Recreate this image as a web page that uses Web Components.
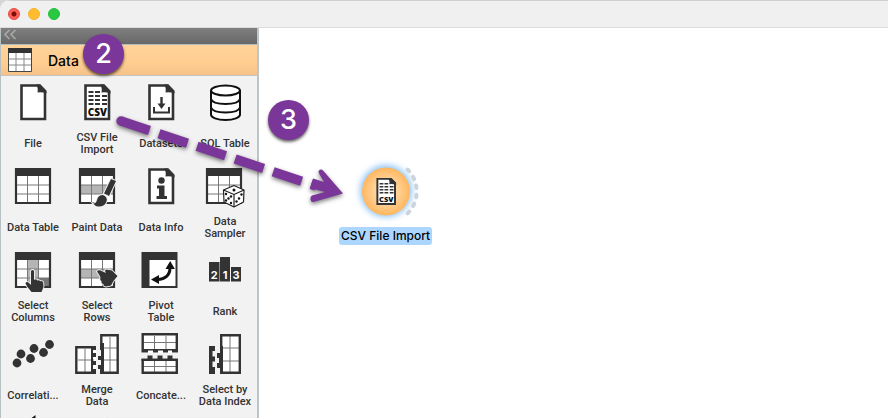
<!DOCTYPE html>
<html lang="en">
<head>
<meta charset="utf-8">
<title>Workflow editor</title>
<style>
  html, body { margin: 0; height: 100%; }
  body { font-family: Inter, "Liberation Sans", sans-serif; color: #262626; background: #d6d6d6; overflow: hidden; }
</style>
</head>
<body>
<app-window>
  <title-bar slot="title"></title-bar>
  <tool-box slot="side" heading="Data">
    <tool-item icon="file">File</tool-item>
    <tool-item icon="csv">CSV File<br>Import</tool-item>
    <tool-item icon="datasets">Datasets</tool-item>
    <tool-item icon="sql">SQL Table</tool-item>
    <tool-item icon="table">Data Table</tool-item>
    <tool-item icon="paint">Paint Data</tool-item>
    <tool-item icon="info">Data Info</tool-item>
    <tool-item icon="sampler">Data<br>Sampler</tool-item>
    <tool-item icon="columns">Select<br>Columns</tool-item>
    <tool-item icon="rows">Select<br>Rows</tool-item>
    <tool-item icon="pivot">Pivot<br>Table</tool-item>
    <tool-item icon="rank">Rank</tool-item>
    <tool-item icon="correlations">Correlati...</tool-item>
    <tool-item icon="merge">Merge<br>Data</tool-item>
    <tool-item icon="concatenate">Concate...</tool-item>
    <tool-item icon="index">Select by<br>Data Index</tool-item>
    <tool-item icon="transpose"></tool-item>
    <tool-item icon="randomize"></tool-item>
  </tool-box>
  <flow-canvas>
    <flow-node icon="csv" style="left:80px;top:137px">CSV File Import</flow-node>
  </flow-canvas>
  <drag-arrow slot="notes"></drag-arrow>
  <step-badge slot="notes" style="left:83px;top:34px">2</step-badge>
  <step-badge slot="notes" style="left:268px;top:100px">3</step-badge>
</app-window>

<script>
const D = '#333';
const page = `<path d="M12.500 6.500h18l5.500 5.500V40H12.500z" fill="#fff" stroke="${D}" stroke-width="2.600"/><path d="M27 5.500h4.500L37.500 12v2.500Q32 12.500 28.500 13.500 29.500 9 27 5.500z" fill="${D}"/>`;
const grid = (fill = '') => `<path d="M7 6h34v34H7z" fill="#fff"/>${fill}<path d="M18.500 12v28M29.500 12v28M8 22h32M8 31h32" stroke="#777" stroke-width="1"/><path d="M7 6h34v34H7z" fill="none" stroke="${D}" stroke-width="2.200"/><path d="M6 5h36v8H6z" fill="${D}"/>`;
const hand = `<path d="M-1.500-10q1.500-2 3 0V-1q2-1.500 3.200.5 2-1 3 .8 2.500-.8 3 1.500 1 4-1 7.500L9 11H-1L-5 6-7 2.500Q-6 0-3.500 2l2 2z" fill="${D}" stroke="#f2f2f2" stroke-width="1.800" paint-order="stroke"/>`;
const ICONS = {
  file: page,
  csv: page + `<path d="M15.500 13h5M22 13h5M15.500 17h5M22 17h5M29 17h5M15.500 21h5M22 21h5M29 21h5M15.500 25h5M22 25h5M29 25h5" stroke="${D}" stroke-width="2"/><text x="24.300" y="37.300" text-anchor="middle" font-family="Open Sans" font-weight="800" font-size="10" fill="#111">CSV</text>`,
  datasets: page + `<path d="M17 28v5.500h15V28" fill="none" stroke="${D}" stroke-width="2"/><path d="M24.500 18v8" stroke="${D}" stroke-width="2.400"/><path d="M20.500 24.500h8l-4 5.500z" fill="${D}"/>`,
  sql: `<g fill="#fff" stroke="#111" stroke-width="2"><path d="M10 11v24.500c0 3 6 5.500 14.500 5.500S39 38.500 39 35.500V11"/><ellipse cx="24.500" cy="11.500" rx="14.500" ry="5"/><path d="M10 20c1 3.500 7 5 14.500 5S38 23.500 39 20M10 28.500c1 3.500 7 5 14.500 5s13.500-1.500 14.500-5" fill="none"/></g>`,
  table: grid(),
  paint: grid('<path d="M8 22h32v9H8z" fill="#b5b5b5"/>') + `<g fill="${D}" stroke="#f2f2f2" stroke-width="2" paint-order="stroke"><path d="M38 16l5 2-7 15-5-2.500z"/><path d="M20 40.500q3 .5 4-3.500 1-5 6-5 5 2 3.500 6.500-2 5.500-8.500 5-3-.5-5-3z"/></g><path d="M30.500 31l5 2.300" stroke="#eee" stroke-width="1"/>`,
  info: page + `<circle cx="24.500" cy="17.500" r="3.200" fill="${D}"/><path d="M20 22.500h7.500V33H30v3H19.500v-3H22v-7.500h-2z" fill="${D}"/>`,
  sampler: `<g transform="translate(-1)">${grid()}</g><g fill="#fff" stroke="#222" stroke-width="1.200" stroke-linejoin="round"><path d="M33 22.500l10 4.500-.5 12-9.500 5-10-5-.5-12z"/><path d="M22.500 27l10.500 4.500L43 27M33 31.500V44" fill="none"/></g><g fill="#111"><circle cx="33" cy="27" r="1.500"/><circle cx="25" cy="31" r="1.200"/><circle cx="30" cy="33.500" r="1.200"/><circle cx="27.500" cy="35.500" r="1.200"/><circle cx="25" cy="37.500" r="1.200"/><circle cx="30" cy="40" r="1.200"/><circle cx="35.500" cy="38.500" r="1.200"/><circle cx="38" cy="35.500" r="1.200"/><circle cx="40.500" cy="31.500" r="1.200"/></g>`,
  columns: grid('<path d="M18.500 12h11v28h-11z" fill="#b5b5b5"/><path d="M30 31h11v9H30z" fill="#777"/>') + `<g transform="translate(23.500 34)">${hand}</g>`,
  rows: grid('<path d="M8 22h32v9H8z" fill="#b5b5b5"/>') + `<path d="M24 24.500q1-2 3.500-1l5.500 2.500q-2-3 .5-3.500l5.500 1 5.500 5.500-4 5-2.500 4.500-5 1q-3-.5-2.500-2.500-2.500-.5-2-3-2-1-1-3.500l-1.500-3z" fill="${D}" stroke="#f2f2f2" stroke-width="1.800" paint-order="stroke"/>`,
  pivot: `<path d="M4.500 5h36v36h-36z" fill="${D}"/><path d="M12.500 13h26v26h-26z" fill="#fff"/><path d="M20 32.500q13-.5 13-12" fill="none" stroke="#111" stroke-width="3"/><path d="M28.500 22l4.700-8 4.700 8zM22 28v9l-8-4.500z" fill="#111"/>`,
  rank: `<path d="M8 15h10.500v19.500H8zM19 10h10v24.500H19zM30 20h10v14.500H30z" fill="${D}"/><g font-family="Inter" font-weight="700" font-size="11" fill="#fff" text-anchor="middle"><text x="13.300" y="32">2</text><text x="24" y="32">1</text><text x="35" y="32">3</text></g>`,
  correlations: `<g fill="${D}"><circle cx="8" cy="32" r="4.400"/><circle cx="12" cy="23" r="4.400"/><circle cx="21.500" cy="27.500" r="4.400"/><circle cx="25" cy="17.500" r="4.400"/><circle cx="34.500" cy="21.500" r="4.400"/><circle cx="40.500" cy="13.500" r="4.400"/></g>`,
  merge: `<path d="M3 17h20v25H3zM29 5h17v37H29z" fill="#fff"/><path d="M12 18v23M5 29h16M37 6v35M31 17h14M31 29h14" stroke="#777"/><path d="M20 16.300H3.300v25.400H20M31 41.700h13.700V4.300H28.300V14" fill="none" stroke="${D}" stroke-width="2.400"/><path d="M18 15h5v4h-3v3h3v4h-3v4h3v4h-3v4h3v5h-5zM27 12h4v31h-4v-5h-2v-4h3v-5h-3v-4h3v-6h-1z" fill="${D}"/>`,
  concatenate: `<path d="M5 4h36v18H5zM5 27h36v16H5z" fill="#fff"/><path d="M17.500 5v13M29 5v13M6 11.500h34M17.500 29v13M29 29v13M6 35.500h34" stroke="#777"/><path d="M5.700 18V3.200h34.100V18M5.700 28v13.800h34.100V28" fill="none" stroke="${D}" stroke-width="2.400"/><path d="M4.500 18h36.500v3.500h-6v-2h-4v2h-5v-2h-5v2h-5v-2h-5v2h-6.500zM4.500 27.500h6v-3h5v3h5v-3h5v3h5v-3h5v3h5.500v2.500H4.500z" fill="${D}"/>`,
  index: `<path d="M21 4h18v39H21z" fill="#fff"/><path d="M29 5v37M21 17h17M21 30h17" stroke="#777"/><path d="M20.200 15V4.200h18.600v37.600H20.200V15" fill="none" stroke="${D}" stroke-width="2.400"/><path d="M19 15h3v26h-3v-4h-3v-5h2v-5h-2v-5h3zM8 15h6v5h-2.500v5.500H14v5h-2.500V36H14v7H8z" fill="${D}"/>`,
  transpose: `<path d="M20 5l6.500-5v10z" fill="#111"/>`,
  randomize: `<path d="M34 2.500l4 4h-8z" fill="#999"/>`
};
const svg = (name, size) => `<svg width="${size}" height="${size}" viewBox="0 0 48 48" aria-hidden="true">${ICONS[name] || ''}</svg>`;

const define = (name, render) => customElements.define(name, class extends HTMLElement {
  constructor() {
    super();
    this.attachShadow({ mode: 'open' });
  }
  connectedCallback() {
    this.shadowRoot.innerHTML = render(this);
  }
});

define('app-window', () => `<style>
  :host { display: flex; flex-direction: column; position: relative; height: 100vh; overflow: hidden; background: #fff; border-radius: 10px 0 0 0; }
  main { display: flex; flex: 1; min-height: 0; }
</style><slot name="title"></slot><main><slot name="side"></slot><slot></slot></main><slot name="notes"></slot>`);

define('title-bar', () => `<style>
  :host { display: flex; align-items: center; gap: 8px; height: 28px; flex: none; box-sizing: border-box; padding-left: 8px; background: #f0f0f0; border-top: 1px solid #d0d0d0; border-bottom: 1px solid #dcdcdc; }
  button { width: 12px; height: 12px; padding: 0; border-radius: 50%; border: 1px solid #e2463f; background: radial-gradient(circle, #7c0b08 0 2px, #fe5f57 3px); }
  .min { background: #febc2e; border-color: #f3b32b; }
  .max { background: #28c840; border-color: #24be3b; }
</style><button aria-label="Close"></button><button class="min" aria-label="Minimize"></button><button class="max" aria-label="Zoom"></button>`);

define('tool-box', el => `<style>
  :host { display: flex; flex-direction: column; flex: none; overflow: hidden; background: #f2f2f2; border-left: 1px solid #b9c0c3; border-right: 2px solid #bdc5c8; }
  button { font: inherit; color: #000; border: 0; margin: 0; text-align: left; }
  .collapse { height: 16px; flex: none; padding: 0 0 0 2px; background: linear-gradient(#7f7f7f, #686868); display: flex; align-items: flex-start; }
  .head { height: 32px; flex: none; display: flex; align-items: center; gap: 15px; padding: 0 6px; font-size: 14px; font-weight: 500; background: linear-gradient(#ffd39b, #ffcd90 60%, #f6c28a); border-top: 1px solid #b5bcbf; border-bottom: 1px solid #c4c4c0; }
  .grid { display: grid; grid-template-columns: repeat(4, 64px); grid-auto-rows: 84px; }
</style>
<button class="collapse" aria-label="Collapse"><svg width="14" height="12"><path d="M6.500 2L2 6.500 6.500 11M12.500 2L8 6.500 12.500 11" fill="none" stroke="#a8a8a8" stroke-width="1.700"/></svg></button>
<button class="head"><svg width="26" height="26"><path d="M2 2h22v22H2z" fill="#fff"/><path d="M9 6v18M17 6v18M2 12h22M2 18h22" stroke="#888"/><path d="M1.500 1.500h23v23h-23z" fill="none" stroke="#444"/><path d="M1 1h24v5H1z" fill="#333"/></svg><span>${el.getAttribute('heading')}</span></button>
<div class="grid"><slot></slot></div>`);

define('tool-item', el => `<style>
  :host { display: block; }
  button { width: 100%; height: 100%; display: flex; flex-direction: column; align-items: center; padding: 3px 0 0; border: 0; background: none; font: 500 11px/12px Roboto, "Liberation Sans", sans-serif; color: #333; }
  svg { flex: none; display: block; }
  span { flex: none; height: 34px; display: flex; align-items: center; }
  b { font-weight: inherit; text-align: center; }
</style><button>${svg(el.getAttribute('icon'), 48)}<span><b><slot></slot></b></span></button>`);

define('flow-canvas', () => `<style>
  :host { display: block; flex: 1; position: relative; background: #fff; overflow: hidden; }
</style><slot></slot>`);

define('flow-node', el => `<style>
  :host { position: absolute; display: flex; flex-direction: column; align-items: center; }
  .ring { display: block; margin-bottom: 8px; overflow: visible; }
  .name { font: 500 12px/18px Inter, "Liberation Sans", sans-serif; color: #000; background: #add6ff; border-radius: 3px; padding: 0 2px; white-space: nowrap; }
</style>
<svg class="ring" width="54" height="54" viewBox="0 0 54 54">
  <defs><radialGradient id="g"><stop offset="0" stop-color="#ffe3c0"/><stop offset=".55" stop-color="#ffcf92"/><stop offset="1" stop-color="#ffb75f"/></radialGradient><filter id="b" x="-40%" y="-40%" width="180%" height="180%"><feGaussianBlur stdDeviation="3"/></filter></defs>
  <circle cx="27" cy="26" r="26" fill="#8ec4f5" filter="url(#b)"/>
  <circle cx="27" cy="26.500" r="24" fill="url(#g)"/>
  <path d="M48.500 4.500a31 31 0 0 1 0 44" fill="none" stroke="#ccd5db" stroke-width="4" stroke-linecap="round" stroke-dasharray="2.500 6.700"/>
  <svg x="9" y="9" width="36" height="36" viewBox="0 0 48 48">${ICONS[el.getAttribute('icon')]}</svg>
</svg><span class="name"><slot></slot></span>`);

define('drag-arrow', () => `<style>
  :host { position: absolute; left: 110px; top: 110px; pointer-events: none; }
  svg { display: block; overflow: visible; filter: drop-shadow(0 2px 2px rgba(0,0,0,.5)); }
</style><svg width="240" height="100" viewBox="110 110 240 100" aria-hidden="true"><circle cx="121" cy="121" r="4.700" fill="#7a3799"/><path d="M121 121L316 186" stroke="#7a3799" stroke-width="9.500" stroke-dasharray="30 10.100"/><path d="M343 193.500L323.500 171q-2.500-2.500-4.500-.5-1 1 0 3L324 182l-11-3.500-3 9.500 15 4-13 3.500q-2 1-1.500 4 .5 3 3 2.500z" fill="#7a3799"/></svg>`);

define('step-badge', () => `<style>
  :host { position: absolute; width: 41px; height: 40px; border-radius: 50%; display: flex; align-items: center; justify-content: center; background: #7a3799; color: #fff; font-size: 27px; font-weight: 500; line-height: 40px; box-shadow: 0 2px 3px rgba(0,0,0,.6); }
</style><slot></slot>`);
</script>
</body>
</html>
